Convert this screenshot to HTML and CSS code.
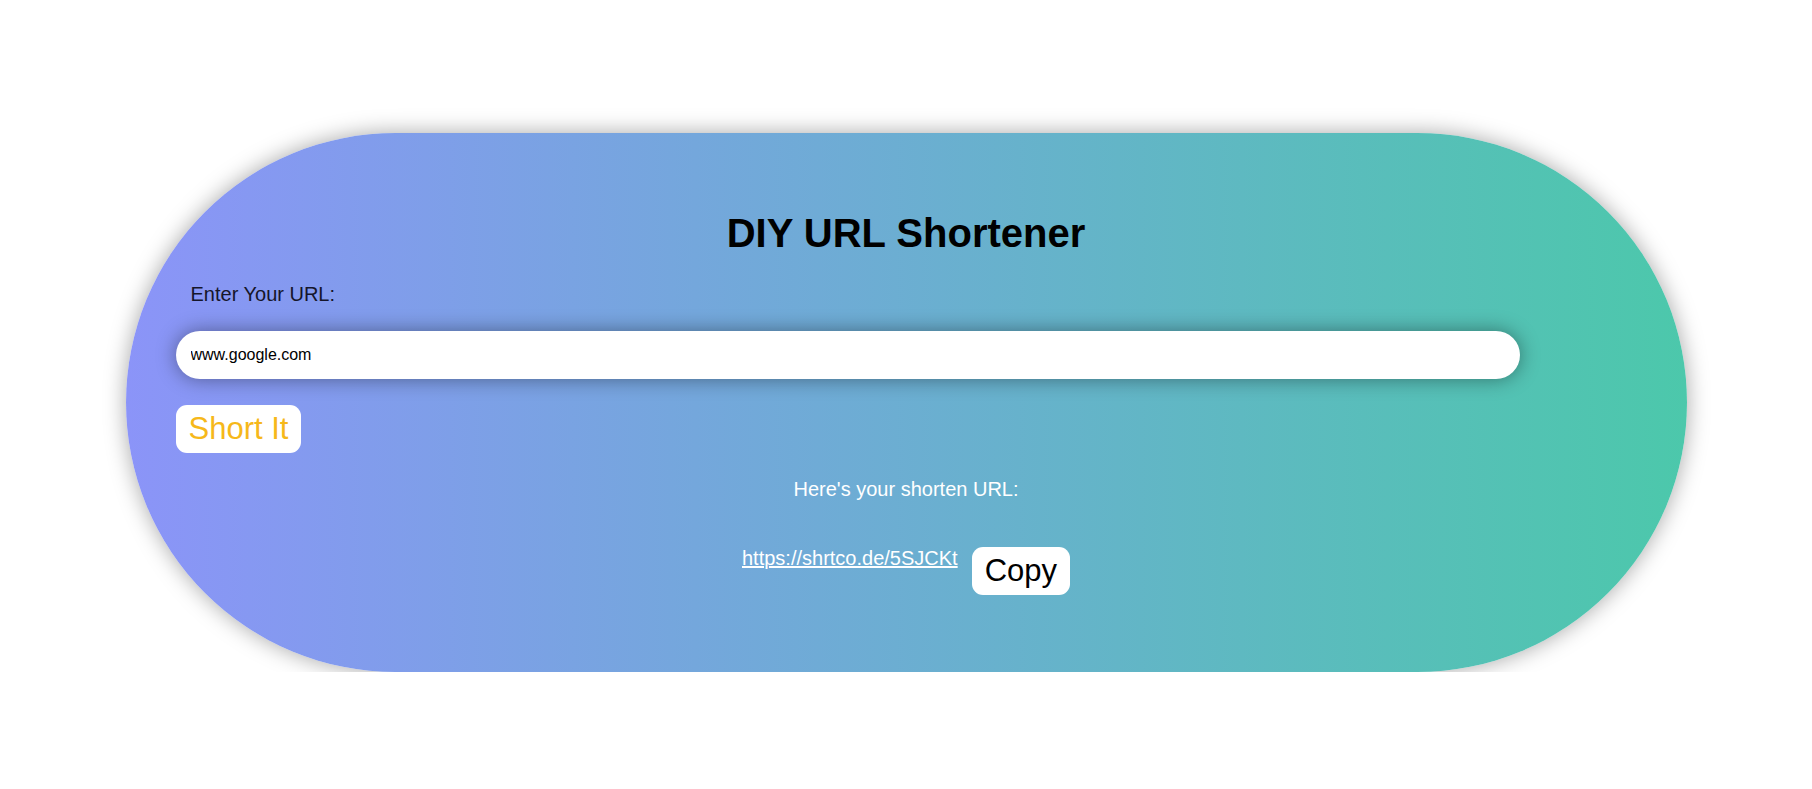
FILE: index.html
```html
<!DOCTYPE html>
<html lang="en">
<head>
<meta charset="utf-8">
<title>DIY URL Shortener</title>
<link rel="stylesheet" href="styles.css">
</head>
<body>
  <main class="card">
    <h1 class="title">DIY URL Shortener</h1>
    <label class="label" for="url">Enter Your URL:</label>
    <input class="url-input" id="url" type="text" value="www.google.com">
    <button class="btn btn-short" type="button">Short It</button>
    <p class="result-label">Here's your shorten URL:</p>
    <div class="result-row">
      <a class="result-link" href="#">https://shrtco.de/5SJCKt</a>
      <button class="btn btn-copy" type="button">Copy</button>
    </div>
  </main>
</body>
</html>
```

FILE: styles.css
```css
* {
  box-sizing: border-box;
}

html, body {
  margin: 0;
  padding: 0;
  background: #ffffff;
}

body {
  font-family: "Liberation Sans", Arial, sans-serif;
  padding-top: 133px;
}

.card {
  width: calc(100% - 251px);
  margin: 0 auto;
  padding: 50px 50px 77px;
  border-radius: 300px;
  background: linear-gradient(to right, #8b94f8, #4cc8ab);
  box-shadow: 0 0 22px rgba(0, 0, 0, 0.35);
  display: flex;
  flex-direction: column;
  align-items: flex-start;
}

.title {
  align-self: stretch;
  text-align: center;
  margin: 27px 0 27px;
  font-size: 40px;
  font-weight: bold;
  line-height: 46px;
  color: #000;
}

.label {
  display: block;
  margin-left: 15px;
  font-size: 20px;
  line-height: 23px;
  color: #15152a;
}

.url-input {
  margin-top: 25px;
  width: 92%;
  height: 48px;
  padding: 0 15px;
  border: none;
  border-radius: 24px;
  background: #fff;
  font-family: "Liberation Sans", Arial, sans-serif;
  font-size: 16px;
  color: #000;
  box-shadow: 0 0 20px rgba(0, 0, 0, 0.4);
  outline: none;
}

.btn {
  border: none;
  border-radius: 11px;
  background: #fff;
  font-family: "Liberation Sans", Arial, sans-serif;
  font-size: 31px;
  line-height: 36px;
  padding: 6px 13px;
  cursor: pointer;
}

.btn-short {
  margin-top: 26px;
  color: #f6b81a;
}

.result-label {
  align-self: stretch;
  text-align: center;
  margin: 25px 0 0;
  font-size: 20px;
  line-height: 23px;
  color: #ffffff;
}

.result-row {
  align-self: stretch;
  margin-top: 46px;
  display: flex;
  justify-content: center;
  align-items: flex-start;
  gap: 14px;
}

.result-link {
  font-size: 20px;
  line-height: 23px;
  color: #ffffff;
  text-decoration: underline;
}

.btn-copy {
  color: #000;
}
```
